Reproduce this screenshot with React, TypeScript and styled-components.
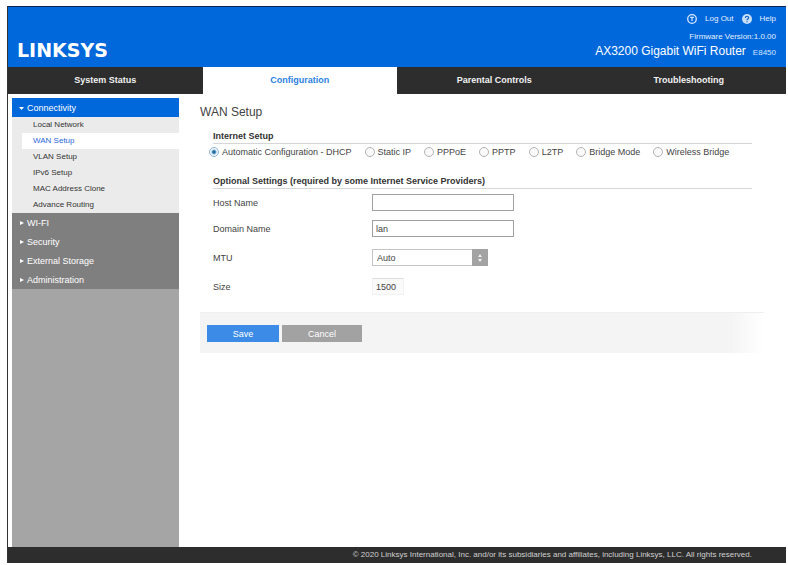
import React, { useState } from "react";
import styled, { createGlobalStyle } from "styled-components";

const GlobalStyle = createGlobalStyle`
  *, *::before, *::after { box-sizing: border-box; }
  body {
    margin: 0;
    background: #fff;
    color: #444;
    font-family: "Liberation Sans", Arial, sans-serif;
    font-size: 9px;
    line-height: 12px;
  }
  button, input, select { font: inherit; color: inherit; margin: 0; }
`;

const Page = styled.div`
  min-height: 100vh;
  padding: 6px 2px 2px 7px;
  display: flex;
`;

const Frame = styled.div`
  flex: 1;
  display: flex;
  flex-direction: column;
  border-left: 1px solid #333;
`;

const Header = styled.header`
  display: flex;
  justify-content: space-between;
  align-items: flex-end;
  padding: 6px 10px 6px 9px;
  border-top: 1px solid #04244f;
  background: #0168dc;
  color: #fff;
`;

const Logo = styled.a`
  font-family: "DejaVu Sans", sans-serif;
  font-size: 19px;
  line-height: 22px;
  font-weight: 700;
  color: #fff;
  text-decoration: none;
`;

const HeaderInfo = styled.div`
  display: flex;
  flex-direction: column;
  align-items: flex-end;
  font-size: 8px;
`;

const Utility = styled.div`
  display: flex;
  gap: 8px;
  margin-bottom: 6px;
`;

const UtilityLink = styled.a`
  display: flex;
  align-items: center;
  gap: 8px;
  color: #e4f0ff;
  text-decoration: none;
`;

const Firmware = styled.div`
  color: #e4f0ff;
`;

const Model = styled.div`
  display: flex;
  align-items: baseline;
  gap: 7px;
  font-size: 12px;
  line-height: 16px;
`;

const ModelCode = styled.span`
  font-size: 8px;
  color: #cfe4ff;
`;

const Tabs = styled.nav`
  display: grid;
  grid-template-columns: repeat(4, 1fr);
  background: #2d2d2d;
`;

const Tab = styled.a<{ $active?: boolean }>`
  padding: 7px 0 8px;
  text-align: center;
  font-weight: 700;
  text-decoration: none;
  background: ${(p) => (p.$active ? "#fff" : "#2d2d2d")};
  color: ${(p) => (p.$active ? "#2c82e0" : "#f2f2f2")};
`;

const Body = styled.div`
  flex: 1;
  display: flex;
  padding: 4px 0 0 4px;
`;

const Sidebar = styled.nav`
  flex: 0 0 167px;
  background: #a5a5a5;
`;

const GroupButton = styled.button<{ $open?: boolean }>`
  display: flex;
  align-items: center;
  gap: 3px;
  width: 100%;
  height: 19px;
  padding: 0 7px;
  border: 0;
  color: #fff;
  text-align: left;
  background: ${(p) => (p.$open ? "#0168dc" : "#7f7f7f")};
`;

const SubList = styled.ul`
  margin: 0;
  padding: 0 0 0 10px;
  list-style: none;
  background: #ebebeb;
`;

const SubLink = styled.a<{ $active?: boolean }>`
  display: block;
  padding: 0 11px;
  font-size: 8px;
  line-height: 16px;
  text-decoration: none;
  color: ${(p) => (p.$active ? "#2d68d8" : "#333")};
  background: ${(p) => (p.$active ? "#fff" : "transparent")};
`;

const Main = styled.main`
  flex: 1;
  min-width: 0;
  padding: 6px 22px 0 21px;
`;

const Title = styled.h1`
  margin: 0;
  font-size: 12px;
  line-height: 16px;
  font-weight: 400;
`;

const Section = styled.section`
  padding: 10px 12px 0 13px;
`;

const SectionTitle = styled.h2`
  margin: 0;
  padding-bottom: 1px;
  border-bottom: 1px solid #d6d6da;
  font-size: 9px;
  line-height: 12px;
  font-weight: 700;
  color: #333;
`;

const RadioGroup = styled.div`
  display: flex;
  flex-wrap: wrap;
  gap: 4px 13px;
  margin: 2px 0 7px -4px;
`;

const RadioLabel = styled.label`
  display: flex;
  align-items: center;
  gap: 3px;
  white-space: nowrap;
`;

const Radio = styled.input`
  appearance: none;
  width: 10px;
  height: 10px;
  border: 1px solid #b2b2b2;
  border-radius: 50%;
  background: #fafafa;
  &:checked {
    border-color: #8fb4d6;
    background: radial-gradient(circle, #17679f 0 1px, #eef6fc 3px);
  }
`;

const Field = styled.div`
  display: grid;
  grid-template-columns: 159px 1fr;
  align-items: center;
  min-height: 17px;
`;

const Fields = styled.div`
  display: grid;
  gap: 12px;
  padding-top: 5px;
`;

const FieldPair = styled.div`
  display: grid;
  gap: 9px;
`;

const TextInput = styled.input`
  width: 100%;
  max-width: 142px;
  height: 17px;
  padding: 0 3px;
  border: 1px solid #a0a0a0;
  background: #fff;
`;

const SizeInput = styled.input`
  width: 32px;
  height: 17px;
  padding: 0 3px;
  border: 1px solid #f2f2f2;
  border-top-color: #ddd;
  background: #fafafa;
`;

const SelectBox = styled.div`
  position: relative;
  width: 116px;
  height: 17px;
`;

const Select = styled.select`
  appearance: none;
  width: 100%;
  height: 17px;
  padding: 0 20px 0 4px;
  border: 1px solid #c4c4c4;
  border-radius: 0;
  background: #fff;
`;

const SelectArrow = styled.span`
  position: absolute;
  top: 0;
  right: 0;
  display: flex;
  align-items: center;
  justify-content: center;
  width: 16px;
  height: 17px;
  background: #a3a3a3;
  pointer-events: none;
`;

const Actions = styled.div`
  display: flex;
  gap: 3px;
  margin-top: 17px;
  padding: 12px 7px 11px;
  border-top: 1px solid #efefef;
  background: linear-gradient(to right, #f4f4f4 94%, #fff);
`;

const ActionButton = styled.button<{ $primary?: boolean }>`
  min-width: ${(p) => (p.$primary ? "72px" : "80px")};
  height: 17px;
  padding: 0;
  border: 0;
  color: #fff;
  background: ${(p) => (p.$primary ? "#3c8be6" : "#a2a2a2")};
`;

const Footer = styled.footer`
  padding: 2px 34px 2px 10px;
  text-align: right;
  font-size: 8px;
  background: #2d2d2d;
  color: #d0d0d0;
`;

const PowerIcon = () => (
  <svg width="10" height="10" viewBox="0 0 10 10" fill="none" stroke="#d8e9ff" aria-hidden="true">
    <circle cx="5" cy="5" r="4.3" strokeWidth="1.3" />
    <path d="M3.2 3.4h3.600M5 3v4" strokeWidth="1.2" />
  </svg>
);

const HelpIcon = () => (
  <svg width="10" height="10" viewBox="0 0 10 10" fill="none" aria-hidden="true">
    <circle cx="5" cy="5" r="5" fill="#c9e0fc" />
    <path d="M3.4 3.9c0-2.3 3.3-2.1 3.3-.2C6.700 4.800 5 4.800 5 6.200M5 7.200v1" stroke="#0b5fc4" strokeWidth="1.2" />
  </svg>
);

const Caret = ({ open }: { open?: boolean }) => (
  <svg width="5" height="6" viewBox="0 0 5 6" fill="#fff" aria-hidden="true">
    <path d={open ? "M0 2h5L2.5 5z" : "M1 1l4 2-4 2z"} />
  </svg>
);

const pages = ["Local Network", "WAN Setup", "VLAN Setup", "IPv6 Setup", "MAC Address Clone", "Advance Routing"];
const groups = ["WI-FI", "Security", "External Storage", "Administration"];
const tabs = ["System Status", "Configuration", "Parental Controls", "Troubleshooting"];
const modes = ["Automatic Configuration - DHCP", "Static IP", "PPPoE", "PPTP", "L2TP", "Bridge Mode", "Wireless Bridge"];

export default function App() {
  const [mode, setMode] = useState(modes[0]);
  return (
    <Page>
      <GlobalStyle />
      <Frame>
        <Header>
          <Logo href="#">LINKSYS</Logo>
          <HeaderInfo>
            <Utility>
              <UtilityLink href="#"><PowerIcon />Log Out</UtilityLink>
              <UtilityLink href="#"><HelpIcon />Help</UtilityLink>
            </Utility>
            <Firmware>Firmware Version:1.0.00</Firmware>
            <Model>AX3200 Gigabit WiFi Router <ModelCode>E8450</ModelCode></Model>
          </HeaderInfo>
        </Header>
        <Tabs>
          {tabs.map((t) => (
            <Tab key={t} href="#" $active={t === "Configuration"}>{t}</Tab>
          ))}
        </Tabs>
        <Body>
          <Sidebar>
            <GroupButton $open aria-expanded="true"><Caret open />Connectivity</GroupButton>
            <SubList>
              {pages.map((p) => (
                <li key={p}><SubLink href="#" $active={p === "WAN Setup"}>{p}</SubLink></li>
              ))}
            </SubList>
            {groups.map((g) => (
              <GroupButton key={g} aria-expanded="false"><Caret />{g}</GroupButton>
            ))}
          </Sidebar>
          <Main>
            <Title>WAN Setup</Title>
            <Section>
              <SectionTitle>Internet Setup</SectionTitle>
              <RadioGroup role="radiogroup" aria-label="Internet Setup">
                {modes.map((m) => (
                  <RadioLabel key={m}>
                    <Radio type="radio" name="mode" checked={mode === m} onChange={() => setMode(m)} />
                    {m}
                  </RadioLabel>
                ))}
              </RadioGroup>
            </Section>
            <Section>
              <SectionTitle>Optional Settings (required by some Internet Service Providers)</SectionTitle>
              <Fields>
                <FieldPair>
                  <Field>
                    <label htmlFor="host">Host Name</label>
                    <TextInput id="host" />
                  </Field>
                  <Field>
                    <label htmlFor="domain">Domain Name</label>
                    <TextInput id="domain" defaultValue="lan" />
                  </Field>
                </FieldPair>
                <Field>
                  <label htmlFor="mtu">MTU</label>
                  <SelectBox>
                    <Select id="mtu" defaultValue="Auto">
                      <option>Auto</option>
                      <option>Manual</option>
                    </Select>
                    <SelectArrow>
                      <svg width="6" height="10" viewBox="0 0 6 10" fill="#f0f0f0" aria-hidden="true">
                        <path d="M1 4l2-3 2 3zM1 6h4L3 9z" />
                      </svg>
                    </SelectArrow>
                  </SelectBox>
                </Field>
                <Field>
                  <label htmlFor="size">Size</label>
                  <SizeInput id="size" defaultValue="1500" readOnly />
                </Field>
              </Fields>
            </Section>
            <Actions>
              <ActionButton $primary>Save</ActionButton>
              <ActionButton>Cancel</ActionButton>
            </Actions>
          </Main>
        </Body>
        <Footer>© 2020 Linksys International, Inc. and/or its subsidiaries and affiliates, including Linksys, LLC. All rights reserved.</Footer>
      </Frame>
    </Page>
  );
}
